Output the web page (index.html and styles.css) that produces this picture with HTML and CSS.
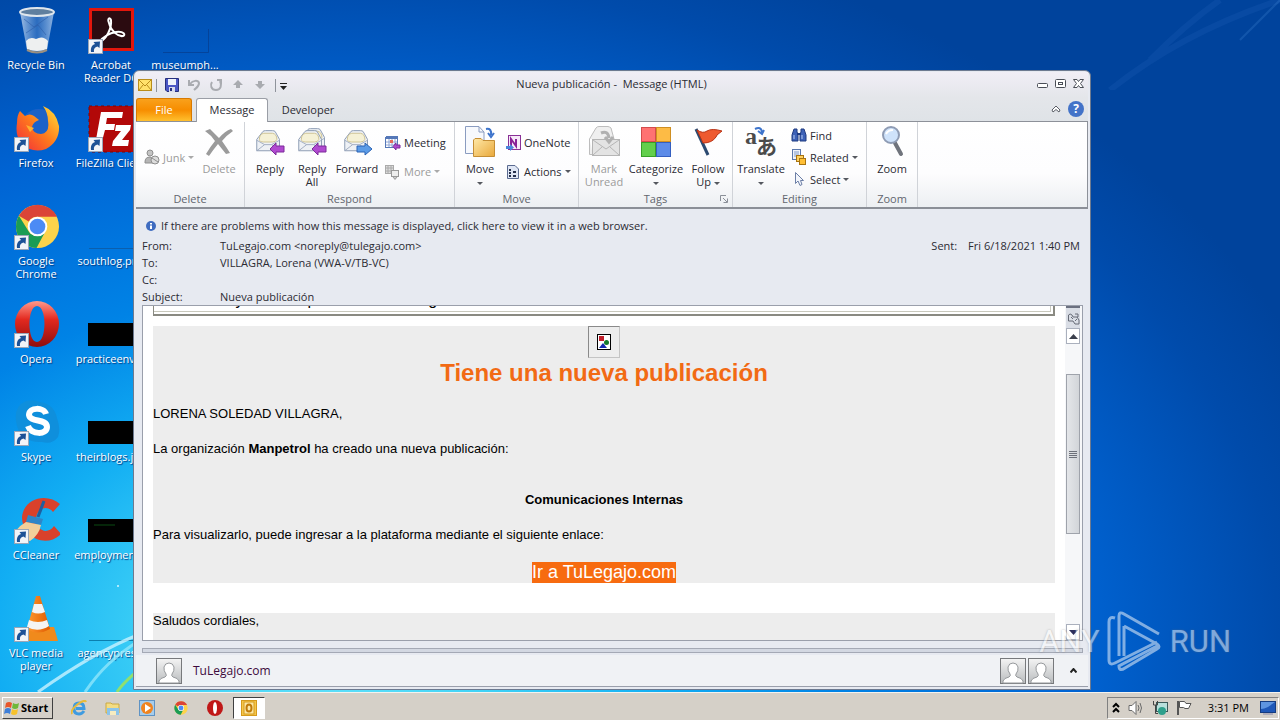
FILE: index.html
```html
<!DOCTYPE html>
<html lang="en">
<head>
    <meta charset="UTF-8">
    <meta name="viewport" content="width=device-width, initial-scale=1.0">
    <title>Nueva publicación - Message (HTML)</title>
    <link rel="stylesheet" href="styles.css">
</head>
<body>

    <!-- shared icons -->
    <svg class="defs" aria-hidden="true">
        <defs>
            <linearGradient id="g-person" x1="0" y1="0" x2="0" y2="1"><stop offset="0" stop-color="#f4f4f4"/><stop offset="1" stop-color="#b9bcbe"/></linearGradient>
            <linearGradient id="g-fold" x1="0" y1="0" x2="1" y2="1"><stop offset="0" stop-color="#ffe9a8"/><stop offset="1" stop-color="#e9a83a"/></linearGradient>
            <linearGradient id="g-opera" x1="0" y1="0" x2="0" y2="1"><stop offset="0" stop-color="#ff9a8c"/><stop offset="0.4" stop-color="#e3291f"/><stop offset="1" stop-color="#8e0d0d"/></linearGradient>
            <linearGradient id="g-fox" x1="0" y1="1" x2="1" y2="0"><stop offset="0" stop-color="#f0263f"/><stop offset="0.5" stop-color="#ff7a1c"/><stop offset="1" stop-color="#ffe43a"/></linearGradient>
            <linearGradient id="g-cone" x1="0" y1="0" x2="1" y2="0"><stop offset="0" stop-color="#ff9a2e"/><stop offset="1" stop-color="#e05a00"/></linearGradient>
            <linearGradient id="g-bin" x1="0" y1="0" x2="1" y2="0"><stop offset="0" stop-color="#bcd3ee" stop-opacity="0.85"/><stop offset="0.5" stop-color="#4f86cc" stop-opacity="0.55"/><stop offset="1" stop-color="#a8c6ea" stop-opacity="0.85"/></linearGradient>
        </defs>
        <symbol id="arrow" viewBox="0 0 15 15">
            <rect x="0.5" y="0.5" width="14" height="14" fill="#f2f4f8" stroke="#9aa6b8"/>
            <path d="M3 13 C2.500 8.500 4 6 7 5 L5.500 3 L12 2.500 L11.500 9 L9.500 7.500 C6.500 8.500 5.500 10 6 13 Z" fill="#1d5196"/>
        </symbol>
        <symbol id="envelope" viewBox="0 0 32 32">
            <path d="M2 13 L9 4 Q10 3 12 3 H20 Q22 3 23 4 L28 13 V26 H2 Z" fill="#eef1f5" stroke="#8191ac"/>
            <path d="M5 13 Q5 7 10 6 H20 Q25 7 25 13 Q24 16 20 16 H10 Q5 16 5 13 Z" fill="#f5f1d6" stroke="#cabf8a"/>
            <path d="M2 14 L11 19 H19 L28 14 M2 26 L11 19 M28 26 L19 19" fill="none" stroke="#9aa7bd"/>
        </symbol>
        <symbol id="chrome" viewBox="0 0 46 46">
            <circle cx="23" cy="23" r="22" fill="#fdd34b"/>
            <path d="M4 12 A22 22 0 0 1 43 13 H23 A10 10 0 0 0 14 18 Z" fill="#db4437"/>
            <path d="M4 12 A22 22 0 0 0 22 45 L31 28 A10 10 0 0 1 14 28 Z" fill="#1a9c55"/>
            <circle cx="23" cy="23" r="10" fill="#fff"/>
            <circle cx="23" cy="23" r="8" fill="#4c8bf5"/>
        </symbol>
        <symbol id="person" viewBox="0 0 26 26">
            <rect x="0.5" y="0.5" width="25" height="25" fill="url(#g-person)" stroke="#77797c"/>
            <path d="M3 25 V23 Q4 20 9 19 Q11 18 10 16 Q7.500 13 8 9 Q9 5 13 5 Q17 5 18 9 Q18.500 13 16 16 Q15 18 17 19 Q22 20 23 23 V25 Z" fill="#fff" stroke="#96999c"/>
        </symbol>
    </svg>

    <main class="desktop">
        <svg class="streaks" viewBox="0 0 300 120" aria-hidden="true">
            <path d="M38 120 C80 90 110 74 140 62" fill="none" stroke="#c9f3ff" stroke-width="3" opacity="0.8"/>
            <path d="M85 120 C100 98 115 84 140 68" fill="none" stroke="#8fe6fb" stroke-width="3" opacity="0.8"/>
            <path d="M117 120 C122 112 128 107 136 100" fill="none" stroke="#8fe070" stroke-width="3"/>
            <circle cx="118" cy="14" r="1" fill="#d8f6ff"/><circle cx="100" cy="-10" r="1" fill="#d8f6ff"/>
        </svg>
        <svg class="rays" viewBox="0 0 190 90" aria-hidden="true">
            <path d="M20 90 C70 50 130 20 190 0 M60 60 C90 30 110 14 130 0" fill="none" stroke="#3f86d8" stroke-width="6" opacity="0.12"/>
            <path d="M150 40 L190 0" stroke="#5aa0e8" stroke-width="2" opacity="0.2"/>
        </svg>

        <nav class="shortcuts">
            <a class="shortcut" href="#">
                <svg viewBox="0 0 48 48">
                    <path d="M8 5 H42 L35 43 Q25 47 15 43 Z" fill="url(#g-bin)"/>
                    <path d="M14 34 Q18 29 24 32 Q31 28 36 34 L35 42 Q25 46 15 42 Z" fill="#eef0f0"/>
                    <path d="M12 12 L22 20 L36 10 M14 26 L26 18 L34 28" fill="none" stroke="#2d5da8" opacity="0.6"/>
                    <ellipse cx="25" cy="5" rx="17" ry="4" fill="#5f7f9f" stroke="#dfe6ec" stroke-width="2"/>
                    <path d="M15 43 Q25 48 35 43" fill="none" stroke="#998f80" stroke-width="2"/>
                </svg>
                <span>Recycle Bin</span>
            </a>
            <a class="shortcut" href="#">
                <svg viewBox="0 0 48 48">
                    <rect x="3.500" y="2.500" width="42" height="40" fill="#2b0b10" stroke="#e2160c" stroke-width="3"/>
                    <path d="M13 35 C19 32 25 22 24 13 C23 10 20 11 22 16 C24 24 31 30 36 29 C39 28 37 24 29 25 C22 26 15 31 13 34 Z" fill="none" stroke="#fff" stroke-width="2"/>
                    <use href="#arrow" x="1" y="32" width="15" height="15"/>
                </svg>
                <span>Acrobat<br>Reader DC</span>
            </a>
            <a class="shortcut" href="#">
                <svg viewBox="0 0 48 48">
                    <path d="M2 45.500 H47.500 V22" fill="none" stroke="#063c8c" opacity="0.7"/>
                </svg>
                <span>museumph...</span>
            </a>
            <a class="shortcut" href="#">
                <svg viewBox="0 0 48 48">
                    <circle cx="27" cy="22" r="18" fill="#1c62c8"/>
                    <path d="M5 18 Q5 10 8 6 L13 11 Q18 8 22 11 L27 15 Q21 17 20 22 Q21 29 29 29 Q38 28 36 16 Q36 8 31 1 Q44 6 47 21 Q48 36 34 44 Q20 49 9 38 Q3 30 5 18 Z" fill="url(#g-fox)"/>
                    <path d="M14 20 L22 23 L18 27 Z" fill="#ffb02e"/>
                    <use href="#arrow" x="2" y="32" width="15" height="15"/>
                </svg>
                <span>Firefox</span>
            </a>
            <a class="shortcut" href="#">
                <svg viewBox="0 0 48 48">
                    <rect x="2" y="1" width="46" height="46" fill="#b20808" stroke="#7c0404" stroke-dasharray="3 3"/>
                    <path d="M14 7 H36 L35 13 H20 L19 19 H28 L27 25 H18 L14 40 H8 Z M29 20 H44 L43 25 L35 35 H42 L41 41 H25 L26 36 L34 26 H28 Z" fill="#fff"/>
                    <use href="#arrow" x="1" y="32" width="15" height="15"/>
                </svg>
                <span>FileZilla Client</span>
            </a>
            <a class="shortcut" href="#">
                <svg viewBox="0 0 48 48">
                    <use href="#chrome" x="3" y="1" width="45" height="45"/>
                    <use href="#arrow" x="2" y="32" width="15" height="15"/>
                </svg>
                <span>Google<br>Chrome</span>
            </a>
            <a class="shortcut" href="#">
                <svg viewBox="0 0 48 48">
                    <path d="M2 45.500 H48" stroke="#0b5fae"/>
                </svg>
                <span>southlog.png</span>
            </a>
            <a class="shortcut" href="#">
                <svg viewBox="0 0 48 48">
                    <path fill-rule="evenodd" d="M25 0 A22 23 0 0 1 25 46 A22 23 0 0 1 25 0 Z M25 5 C15 5 15 41 25 41 C35 41 35 5 25 5 Z" fill="url(#g-opera)"/>
                    <use href="#arrow" x="2" y="32" width="15" height="15"/>
                </svg>
                <span>Opera</span>
            </a>
            <a class="shortcut" href="#">
                <svg viewBox="0 0 48 48"><rect x="1" y="22" width="47" height="23"/></svg>
                <span>practiceenvi...</span>
            </a>
            <a class="shortcut" href="#">
                <svg viewBox="0 0 48 48">
                    <path d="M14 2 Q22 0 28 3 Q42 5 45 19 Q49 30 46 38 Q40 46 30 43 Q10 44 5 27 Q0 8 14 2 Z" fill="#0f8fdc"/>
                    <path d="M34 15 C32 8 17 8 17 16 C18 24 35 19 35 28 C35 36 19 36 16 27" fill="none" stroke="#fff" stroke-width="6"/>
                    <use href="#arrow" x="2" y="32" width="15" height="15"/>
                </svg>
                <span>Skype</span>
            </a>
            <a class="shortcut" href="#">
                <svg viewBox="0 0 48 48"><rect x="1" y="22" width="47" height="23"/></svg>
                <span>theirblogs.jpg</span>
            </a>
            <a class="shortcut" href="#">
                <svg viewBox="0 0 48 48">
                    <path d="M48 7 C36 -4 12 0 10 20 C10 40 34 52 49 37 L42 29 C36 38 24 34 24 22 C25 10 36 8 41 15 Z" fill="#d9412b"/>
                    <path d="M32 4 L26 20" stroke="#1e5fa0" stroke-width="3"/>
                    <path d="M16 18 L31 22 L29 28 L14 25 Z" fill="#2f86c8"/>
                    <path d="M14 25 L29 28 Q27 38 18 44 L3 40 Q2 32 14 25 Z" fill="#f2cf9a"/>
                    <use href="#arrow" x="2" y="32" width="15" height="15"/>
                </svg>
                <span>CCleaner</span>
            </a>
            <a class="shortcut" href="#">
                <svg viewBox="0 0 48 48"><rect x="1" y="22" width="47" height="23"/><path d="M7 28 H28" stroke="#0b4a12"/></svg>
                <span>employment...</span>
            </a>
            <a class="shortcut" href="#">
                <svg viewBox="0 0 48 48">
                    <path d="M10 32 H42 L46 46 H8 Z" fill="#f08a1c"/>
                    <path d="M24 1 H28 L38 34 Q26 41 15 34 Z" fill="url(#g-cone)"/>
                    <path d="M22 9 H30 L33 17 Q26 20 20 17 Z M17 25 Q26 29 35 25 L37 31 Q26 38 15 32 Z" fill="#f4f4f4"/>
                    <use href="#arrow" x="2" y="32" width="15" height="15"/>
                </svg>
                <span>VLC media<br>player</span>
            </a>
            <a class="shortcut" href="#">
                <svg viewBox="0 0 48 48"><path d="M2 45.500 H48" stroke="#0b7fae"/></svg>
                <span>agencypres...</span>
            </a>
        </nav>

        <section class="window">
            <header class="titlebar">
                <div class="quick">
                    <svg width="14" height="12" viewBox="0 0 14 12"><rect x="0.5" y="0.5" width="13" height="11" fill="#ffe26b" stroke="#b98d1b"/><path d="M1 1 L7 7 L13 1 M1 11 L5 6 M13 11 L9 6" fill="none" stroke="#b98d1b"/></svg>
                    <i class="bar"></i>
                    <button class="plain" aria-label="Save"><svg width="14" height="14" viewBox="0 0 14 14"><path d="M0.500 0.500 H13.500 V13.500 H2 L0.500 12 Z" fill="#4a56c4" stroke="#27307e"/><rect x="3" y="1" width="8" height="6" fill="#eef2fb"/><rect x="4" y="9" width="6" height="5" fill="#d8dcec"/><rect x="5" y="10" width="2" height="3" fill="#27307e"/></svg></button>
                    <button class="plain" aria-label="Undo" disabled><svg width="14" height="14" viewBox="0 0 14 14"><path d="M2 2 V7 H7 M3 6 C6 2 11 2 12 5 C12 9 9 10 7 12" fill="none" stroke="#a9abb0" stroke-width="2"/></svg></button>
                    <button class="plain" aria-label="Redo" disabled><svg width="14" height="14" viewBox="0 0 14 14"><path d="M8 2 H12 V6 M11 3 C13 7 12 12 7 12 C2 12 1 7 3 4" fill="none" stroke="#a9abb0" stroke-width="2"/></svg></button>
                    <button class="plain" aria-label="Previous" disabled><svg width="14" height="14" viewBox="0 0 14 14"><path d="M7 2 L12 7 H9 V10 H5 V7 H2 Z" fill="#a9abb0"/></svg></button>
                    <button class="plain" aria-label="Next" disabled><svg width="14" height="14" viewBox="0 0 14 14"><path d="M7 11 L12 6 H9 V3 H5 V6 H2 Z" fill="#a9abb0"/></svg></button>
                    <i class="bar"></i>
                    <button class="plain narrow" aria-label="Customize toolbar"><svg width="7" height="14" viewBox="0 0 7 14"><path d="M0 5.500 H7" stroke="#222"/><path d="M0 8 H7 L3.500 12 Z" fill="#222"/></svg></button>
                </div>
                <h1>Nueva publicación -&nbsp; Message (HTML)</h1>
                <div class="controls">
                    <button class="plain" aria-label="Minimize"><svg width="12" height="12" viewBox="0 0 12 12"><rect x="0.500" y="5.500" width="10" height="4" rx="1" fill="#fff" stroke="#4a4e57"/></svg></button>
                    <button class="plain" aria-label="Restore"><svg width="12" height="12" viewBox="0 0 12 12"><rect x="0.500" y="1.500" width="10" height="8" rx="1" fill="#fff" stroke="#4a4e57"/><rect x="3.500" y="4.500" width="4" height="2" fill="#fff" stroke="#4a4e57"/></svg></button>
                    <button class="plain" aria-label="Close"><svg width="12" height="12" viewBox="0 0 12 12"><path d="M0.500 1.500 H4 L5.500 3.500 L7 1.500 H10.500 L7.500 5.500 L10.500 9.500 H7 L5.500 7.500 L4 9.500 H0.500 L3.500 5.500 Z" fill="#fff" stroke="#4a4e57"/></svg></button>
                </div>
            </header>

            <nav class="tabs">
                <button class="tab file">File</button>
                <button class="tab active">Message</button>
                <button class="tab">Developer</button>
                <div class="tabs-end">
                    <button class="plain" aria-label="Minimize the ribbon"><svg width="10" height="10" viewBox="0 0 10 10"><path d="M1 6 L5 2 L9 6 L8 8 L5 5.500 L2 8 Z" fill="#fff" stroke="#5a5e67"/></svg></button>
                    <button class="help" aria-label="Help">?</button>
                </div>
            </nav>

            <div class="ribbon">
                <div class="group g-delete">
                    <div class="tools">
                        <div class="stack junk">
                            <button class="small" disabled>
                                <svg width="16" height="16" viewBox="0 0 16 16"><circle cx="6" cy="4" r="3" fill="#c4c4c4" stroke="#8e8e8e"/><path d="M1 13 Q1 8 6 8 Q10 8 11 12 V14 H1 Z" fill="#b5b5b5" stroke="#8e8e8e"/><circle cx="11" cy="11" r="4" fill="#ddd" stroke="#8e8e8e"/><path d="M8 9 L14 13" stroke="#8e8e8e"/></svg>
                                Junk <i class="caret"></i>
                            </button>
                        </div>
                        <button class="big" disabled>
                            <svg width="32" height="32" viewBox="0 0 32 32"><path d="M2 5 L7 3 L16 12 Q22 5 28 3 L30 5 Q24 9 19 15 Q24 22 27 27 L23 28 Q19 23 15 18 Q10 24 6 30 L3 28 Q7 21 12 15 Q8 9 2 5 Z" fill="#9b9b9b"/></svg>
                            Delete
                        </button>
                    </div>
                    <h2>Delete</h2>
                </div>
                <div class="group g-respond">
                    <div class="tools">
                        <button class="big">
                            <svg width="32" height="32" viewBox="0 0 32 32"><use href="#envelope" x="1" width="28" height="32"/><path d="M16 23 L22 17 V20 H30 V26 H22 V29 Z" fill="#b04ad0" stroke="#7c2b9a"/></svg>
                            Reply
                        </button>
                        <button class="big">
                            <svg width="32" height="32" viewBox="0 0 32 32"><use href="#envelope" x="4" y="-2" width="28" height="32"/><use href="#envelope" x="1" width="28" height="32"/><path d="M16 23 L22 17 V20 H30 V26 H22 V29 Z" fill="#b04ad0" stroke="#7c2b9a"/></svg>
                            Reply All
                        </button>
                        <button class="big mid">
                            <svg width="32" height="32" viewBox="0 0 32 32"><use href="#envelope" x="2" width="28" height="32"/><path d="M31 23 L24 17 V20 H16 V26 H24 V29 Z" fill="#5b9be6" stroke="#2a63b4"/></svg>
                            Forward
                        </button>
                        <div class="stack">
                            <button class="small">
                                <svg width="16" height="16" viewBox="0 0 16 16"><rect x="0.500" y="2.500" width="12" height="10" fill="#fff" stroke="#5578b8"/><rect x="1" y="1" width="12" height="3" fill="#5578b8"/><path d="M4 4 V12 M7 4 V12 M10 4 V12 M1 7 H12 M1 10 H12" stroke="#8fa6d4"/><rect x="5" y="5" width="3" height="3" fill="#e66b5b"/><path d="M8 11.500 L11 8 V10 H15 V13 H11 V15 Z" fill="#b04ad0" stroke="#7c2b9a"/></svg>
                                Meeting
                            </button>
                            <button class="small" disabled>
                                <svg width="16" height="16" viewBox="0 0 16 16"><rect x="0.500" y="1.500" width="8" height="8" fill="#ddd" stroke="#aaa"/><path d="M3 1 V9 M6 1 V9 M1 4 H8 M1 7 H8" stroke="#aaa"/><rect x="6.500" y="6.500" width="7" height="6" fill="#eee" stroke="#999"/><path d="M10 12 V15 M12 13 L10 15.500 L8 13" stroke="#999" fill="none"/></svg>
                                More <i class="caret"></i>
                            </button>
                        </div>
                    </div>
                    <h2>Respond</h2>
                </div>
                <div class="group g-move">
                    <div class="tools">
                        <button class="big">
                            <svg width="32" height="32" viewBox="0 0 32 32"><path d="M1.500 0.500 H15 L20 6 V27.500 H1.500 Z" fill="#f7f9fd" stroke="#8a9cc0"/><path d="M15 1 V6 H20" fill="none" stroke="#8a9cc0"/><path d="M22 3 Q28 2 27 9 M24 7 L27 11 L30 7" fill="none" stroke="#3d74cc" stroke-width="2"/><path d="M9.500 14 L11 12.500 H17 L19 14.500 H30.500 V30.500 H9.500 Z" fill="url(#g-fold)" stroke="#c58e35"/></svg>
                            Move<br><i class="caret"></i>
                        </button>
                        <div class="stack">
                            <button class="small">
                                <svg width="16" height="16" viewBox="0 0 16 16"><rect x="3.500" y="0.500" width="12" height="14" fill="#f6e9f8" stroke="#8a3196"/><path d="M6 11 V4 L11 11 V4" fill="none" stroke="#8a2096" stroke-width="2"/><path d="M1 11 H5 V9 L9 12.500 L5 16 V14 H1 Z" fill="#4b86dc"/></svg>
                                OneNote
                            </button>
                            <button class="small">
                                <svg width="16" height="16" viewBox="0 0 16 16"><path d="M2.500 1.500 H10 L13.500 5 V14.500 H2.500 Z" fill="#dfe6f4" stroke="#5a6a90"/><path d="M4 6 H6 M4 9 H6 M4 12 H6 M8 8 H11 M8 12 H11" stroke="#26304c" stroke-width="2"/></svg>
                                Actions <i class="caret"></i>
                            </button>
                        </div>
                    </div>
                    <h2>Move</h2>
                </div>
                <div class="group g-tags">
                    <div class="tools">
                        <button class="big" disabled>
                            <svg width="32" height="32" viewBox="0 0 32 32"><path d="M1.500 13 V28.500 H5 M1.500 13 L8 2 Q9 0.500 11 0.500 H20 Q22 1 23 2 L26 13" fill="#efefef" stroke="#bdbdbd"/><rect x="4.500" y="13.500" width="27" height="16" fill="#e3e3e3" stroke="#b5b5b5"/><path d="M5 14 L18 23 L31 14 M5 29 L14 21 M31 29 L22 21" fill="none" stroke="#b5b5b5"/><path d="M13 7 Q20 4 21 12 M17 11 L21 16 L25 11" fill="none" stroke="#b0b0b0" stroke-width="3"/></svg>
                            Mark Unread
                        </button>
                        <button class="big wide">
                            <svg width="32" height="32" viewBox="0 0 32 32"><rect x="1.500" y="1.500" width="14" height="14" fill="#ff7272" stroke="#d44c4c"/><rect x="16.500" y="1.500" width="14" height="14" fill="#fdbb45" stroke="#cf8f22"/><rect x="1.500" y="16.500" width="14" height="14" fill="#62cf4c" stroke="#37a028"/><rect x="16.500" y="16.500" width="14" height="14" fill="#5c8be8" stroke="#345fc0"/></svg>
                            Categorize<br><i class="caret"></i>
                        </button>
                        <button class="big">
                            <svg width="32" height="32" viewBox="0 0 32 32"><path d="M4 3 L16 29" stroke="#2c4a70" stroke-width="3"/><path d="M5 4 Q11 8 15 5 Q20 2 30 5 L25 9 L24 11 Q20 17 11 17 Z" fill="#ee5a30" stroke="#b83214"/></svg>
                            Follow Up <i class="caret"></i>
                        </button>
                    </div>
                    <h2>Tags</h2>
                    <button class="plain launcher" aria-label="Message options"><svg width="8" height="8" viewBox="0 0 8 8"><path d="M0.500 6 V0.500 H6 M3 3 L7 7 M7.500 3.500 V7.500 H3.500" fill="none" stroke="#8a8f98"/></svg></button>
                </div>
                <div class="group g-editing">
                    <div class="tools">
                        <button class="big mid">
                            <svg class="glyphs" width="32" height="32" viewBox="0 0 32 32"><text class="latin" x="0" y="18">a</text><text class="kana" x="11" y="28">あ</text><path d="M10 3 Q16 0 17 6 M13 5 L17 8 L19 4" fill="none" stroke="#3d74cc" stroke-width="2"/></svg>
                            Translate<br><i class="caret"></i>
                        </button>
                        <div class="stack three">
                            <button class="small">
                                <svg width="16" height="16" viewBox="0 0 16 16"><path d="M3 2 H6 V5 L7 7 V14 H1 V8 Z M10 2 H13 L15 8 V14 H9 V7 L10 5 Z" fill="#3d62b8" stroke="#1f3a80"/><path d="M6 7 H10" stroke="#1f3a80" stroke-width="2"/><path d="M3 8 V12 M11 8 V12" stroke="#b8cdf4"/></svg>
                                Find
                            </button>
                            <button class="small">
                                <svg width="16" height="16" viewBox="0 0 16 16"><rect x="1.500" y="0.500" width="8" height="10" fill="#eef3fb" stroke="#5a78ac"/><path d="M3 3 H8 M3 5 H8 M3 7 H8" stroke="#7f9acb"/><rect x="5.500" y="6.500" width="7" height="6" fill="#ffd262" stroke="#a87410"/><rect x="8.500" y="9.500" width="6" height="6" fill="#ffbf35" stroke="#a87410"/></svg>
                                Related <i class="caret"></i>
                            </button>
                            <button class="small">
                                <svg width="16" height="16" viewBox="0 0 16 16"><path d="M4.500 1.500 V12.500 L7 10 L9 14.500 L11 13.500 L9.500 9.500 H12.500 Z" fill="#f2f5fb" stroke="#6c7fa6"/></svg>
                                Select <i class="caret"></i>
                            </button>
                        </div>
                    </div>
                    <h2>Editing</h2>
                </div>
                <div class="group g-zoom">
                    <div class="tools">
                        <button class="big">
                            <svg width="32" height="32" viewBox="0 0 32 32"><path d="M19 17 L25 28" stroke="#70747c" stroke-width="4" stroke-linecap="round"/><circle cx="15" cy="9" r="8" fill="#cfe3fb" stroke="#8f9cb4" stroke-width="2"/><path d="M10 8 Q12 4 17 4" stroke="#fff" stroke-width="2" fill="none"/></svg>
                            Zoom
                        </button>
                    </div>
                    <h2>Zoom</h2>
                </div>
            </div>

            <div class="message-head">
                <p class="infobar">
                    <svg width="10" height="10" viewBox="0 0 10 10"><circle cx="5" cy="5" r="5" fill="#3f6cc0"/><path d="M5 2 V3.500 M5 4.500 V8" stroke="#fff" stroke-width="2"/></svg>
                    If there are problems with how this message is displayed, click here to view it in a web browser.
                </p>
                <dl class="fields">
                    <dt>From:</dt><dd>TuLegajo.com &lt;noreply@tulegajo.com&gt;</dd>
                    <dt>To:</dt><dd>VILLAGRA, Lorena (VWA-V/TB-VC)</dd>
                    <dt>Cc:</dt><dd></dd>
                    <dt>Subject:</dt><dd>Nueva publicación</dd>
                </dl>
                <p class="sent"><span>Sent:</span><span>Fri 6/18/2021 1:40 PM</span></p>
            </div>

            <div class="pane">
                <article class="mail">
                    <p class="notice">Contenido y enlaces para mostrar imagen</p>
                    <div class="block">
                        <span class="missing" role="img" aria-label="Image not loaded"><svg width="14" height="16" viewBox="0 0 14 16"><rect x="0.500" y="0.500" width="13" height="15" fill="#fff" stroke="#000"/><rect x="2" y="2" width="5" height="5" fill="#c01f2c"/><circle cx="9.500" cy="8.500" r="2.500" fill="#157a2c"/><path d="M2 14 L6 9 L10 14 Z" fill="#1528b0"/></svg></span>
                        <h3>Tiene una nueva publicación</h3>
                        <p>LORENA SOLEDAD VILLAGRA,</p>
                        <p>La organización <b>Manpetrol</b> ha creado una nueva publicación:</p>
                        <p class="topic">Comunicaciones Internas</p>
                        <p>Para visualizarlo, puede ingresar a la plataforma mediante el siguiente enlace:</p>
                        <div class="center"><a class="cta" href="#">Ir a TuLegajo.com</a></div>
                    </div>
                    <div class="block last"><p>Saludos cordiales,</p></div>
                </article>
                <div class="scroll">
                    <i class="split"></i>
                    <button class="plain ruler" aria-label="Ruler"><svg width="13" height="12" viewBox="0 0 13 12"><path d="M1.500 2 Q3 0 5 2 L6 4 H11 V1 H8 M1.500 2 V8 H6 L8 11 H12 V7 L10 4 M8 8 L10 6 M4 4 L6 6" fill="none" stroke="#666b76"/></svg></button>
                    <button class="plain step up" aria-label="Scroll up"><svg width="9" height="5" viewBox="0 0 9 5"><path d="M0 5 L4.500 0 L9 5 Z" fill="#3a3f4c"/></svg></button>
                    <div class="track"><div class="thumb"><i></i><i></i><i></i><i></i></div></div>
                    <button class="plain step" aria-label="Scroll down"><svg width="9" height="5" viewBox="0 0 9 5"><path d="M0 0 L4.500 5 L9 0 Z" fill="#2d2f5c"/></svg></button>
                </div>
            </div>

            <div class="splitter"></div>

            <footer class="people">
                <svg width="26" height="26"><use href="#person" width="26" height="26"/></svg>
                <a href="#">TuLegajo.com</a>
                <div class="faces">
                    <svg width="26" height="26"><use href="#person" width="26" height="26"/></svg>
                    <svg width="26" height="26"><use href="#person" width="26" height="26"/></svg>
                </div>
                <button class="plain" aria-label="Expand people pane"><svg width="7" height="5" viewBox="0 0 7 5"><path d="M0.500 4.500 L3.500 1 L6.500 4.500" fill="none" stroke="#222" stroke-width="2"/></svg></button>
            </footer>
        </section>

        <div class="watermark">
            <span>ANY</span>
            <svg width="56" height="64" viewBox="0 0 56 64"><path d="M8 8 Q2 6 2 12 V50 Q2 56 8 53 L50 32 M12 46 V6 Q12 1 17 4 L52 24 M17 16 L50 34 Q54 37 50 39 L18 58 Q12 62 12 56 L50 36 M17 16 V46" fill="none" stroke="#fff" stroke-width="3"/></svg>
            <span>RUN</span>
        </div>
    </main>

    <footer class="taskbar">
        <button class="start">
            <svg width="16" height="16" viewBox="0 0 16 16"><path d="M2 3 Q5 1 8 3 L7 8 Q4 6 1 8 Z" fill="#e8562a"/><path d="M9 3 Q12 5 15 3 L14 8 Q11 10 8 8 Z" fill="#6fb83a"/><path d="M1 9 Q4 7 7 9 L6 14 Q3 12 0 14 Z" fill="#3f7fd8"/><path d="M8 9 Q11 11 14 9 L13 14 Q10 16 7 14 Z" fill="#f7c22c"/></svg>
            Start
        </button>
        <div class="apps">
            <button class="app" aria-label="Internet Explorer"><svg viewBox="0 0 16 16"><path d="M13 11 Q11 14 8 14 Q3 14 3 8.500 Q3 3 8 3 Q13 3 13 8.500 H5" fill="none" stroke="#3f9be0" stroke-width="3"/><path d="M1 14 Q-1 10 7 4 Q14 -1 15 2" fill="none" stroke="#e8bb3a" stroke-width="2"/></svg></button>
            <button class="app" aria-label="Explorer"><svg viewBox="0 0 16 16"><path d="M1 3 H6 L7 4 H14 V13 H1 Z" fill="#f4dc82" stroke="#c9a944"/><rect x="2" y="8" width="12" height="7" fill="#8cc4ea"/><path d="M5 11 H11 V15 H5 Z" fill="#f7ecc0"/></svg></button>
            <button class="app" aria-label="Media Player"><svg viewBox="0 0 16 16"><rect x="0.500" y="0.500" width="15" height="15" fill="#a6cdec" stroke="#5f93c4"/><circle cx="8" cy="8" r="6" fill="#f08420"/><path d="M6 4 L12 8 L6 12 Z" fill="#fff"/></svg></button>
            <button class="app" aria-label="Chrome"><svg viewBox="0 0 16 16"><use href="#chrome" x="1" y="1" width="14" height="14"/></svg></button>
            <button class="app" aria-label="Opera"><svg viewBox="0 0 16 16"><circle cx="8" cy="8" r="8" fill="#c01818"/><ellipse cx="8" cy="8" rx="2" ry="6" fill="#fff"/></svg></button>
            <button class="app running" aria-label="Outlook"><svg viewBox="0 0 16 16"><rect x="0.500" y="0.500" width="15" height="15" fill="#f5c64a" stroke="#d59a1c"/><rect x="3" y="2" width="10" height="12" fill="#fbe7a6" stroke="#d59a1c"/><ellipse cx="8" cy="8" rx="2.500" ry="3.500" fill="none" stroke="#c07a08" stroke-width="2"/></svg></button>
        </div>
        <div class="tray">
            <svg width="8" height="12" viewBox="0 0 8 12"><path d="M1 5 L4 2 L7 5 M1 10 L4 7 L7 10" fill="none" stroke="#000" stroke-width="2"/></svg>
            <svg width="16" height="16" viewBox="0 0 16 16"><path d="M1 5.500 H4 L8 1.500 V14.500 L4 10.500 H1 Z" fill="#fff" stroke="#6a6a6a"/><path d="M10 5 Q12 8 10 11 M12 3 Q15 8 12 13" fill="none" stroke="#6a6a6a"/></svg>
            <svg width="16" height="16" viewBox="0 0 16 16"><rect x="4.500" y="2.500" width="11" height="9" fill="#b8e0dc" stroke="#3a5a5a"/><circle cx="10" cy="11" r="4" fill="#2fa08c"/><path d="M1.500 1 V5 H5.500 V1 M3.500 5 V13.500 H6" fill="none" stroke="#444"/></svg>
            <svg width="16" height="16" viewBox="0 0 16 16"><path d="M2 1 V15" stroke="#555" stroke-width="2"/><path d="M3.500 1.500 H8.500 L10 3.500 H15 L12.500 8.500 H9 L7.500 7.500 H3.500 Z" fill="#fff" stroke="#555"/></svg>
            <time>3:31 PM</time>
            <svg width="16" height="14" viewBox="0 0 16 14"><rect x="0.500" y="0.500" width="15" height="11" fill="#1f58b8" stroke="#163c80"/><path d="M1 1 H15 L8 6 Q4 8 1 8 Z" fill="#5f95e0"/><path d="M3 13 H13" stroke="#88a"/></svg>
        </div>
    </footer>

</body>
</html>
```

FILE: styles.css
```css
* {
    box-sizing: border-box;
}

body {
    margin: 0;
    height: 100vh;
    display: flex;
    flex-direction: column;
    overflow: hidden;
    font-family: "Open Sans", "Noto Sans", sans-serif;
    font-size: 11px;
    line-height: 13px;
    color: #2b2b33;
}

h1, h2, h3, p, dl, dd {
    margin: 0;
    font-weight: normal;
}

a {
    text-decoration: none;
}

button {
    padding: 0;
    border: none;
    background: none;
    font: inherit;
    color: inherit;
}

svg {
    display: block;
    flex: none;
}

.defs {
    position: absolute;
    width: 0;
    height: 0;
}

.plain {
    display: flex;
    align-items: center;
    justify-content: center;
}

.caret {
    display: inline-block;
    vertical-align: middle;
    border: 3px solid transparent;
    border-top-color: #55585f;
    border-bottom: none;
}

button:disabled {
    color: #9b9b9b;
}

button:disabled .caret {
    border-top-color: #a9a9a9;
}

/* Desktop */

.desktop {
    flex: 1;
    min-height: 0;
    position: relative;
    overflow: hidden;
    background: radial-gradient(ellipse 82% 106% at 26% 92%, #6fe6fa 0%, #40d2f6 16%, #12aef3 32%, #0083e6 48%, #0064d4 70%, #004bab 90%, #00439c 100%);
}

.streaks {
    position: absolute;
    left: 0;
    bottom: 0;
    width: 300px;
    height: 120px;
    overflow: visible;
}

.rays {
    position: absolute;
    top: 0;
    right: 0;
    width: 190px;
    height: 90px;
}

.shortcuts {
    display: grid;
    grid-template-columns: 72px 78px 70px;
    grid-auto-rows: 98px;
    padding-top: 7px;
}

.shortcut {
    display: flex;
    flex-direction: column;
    align-items: center;
    gap: 3px;
    color: #fff;
    text-align: center;
    white-space: nowrap;
    text-shadow: 1px 1px 1px #003a80;
}

.shortcut:nth-child(2n+4) {
    grid-column: 1;
}

.shortcut svg {
    width: 48px;
    height: 48px;
}

/* Message window */

.window {
    position: absolute;
    top: 70px;
    left: 133px;
    right: 189px;
    bottom: 2px;
    display: flex;
    flex-direction: column;
    padding: 1px 2px 2px;
    border: 1px solid #6d7a90;
    border-radius: 6px 6px 0 0;
    background: #e7eaf1;
}

.titlebar {
    display: grid;
    grid-template-columns: 1fr auto 1fr;
    align-items: center;
    height: 26px;
    padding: 0 3px 0 2px;
    background: linear-gradient(#f1eef6, #e4e6ea);
}

.titlebar h1 {
    padding-bottom: 3px;
    font-size: 11px;
}

.quick {
    display: flex;
    align-items: center;
}

.quick .plain {
    width: 22px;
}

.quick .narrow {
    width: 7px;
}

.bar {
    width: 1px;
    height: 13px;
    margin: 0 4px;
    background: #8f939b;
}

.controls {
    display: flex;
    justify-content: flex-end;
    gap: 6px;
    padding-bottom: 3px;
}

.tabs {
    display: flex;
    gap: 4px;
    height: 24px;
    border-bottom: 1px solid #8d9199;
    background: linear-gradient(#e4e6ea, #dfe3e7);
}

.tab {
    width: 72px;
    height: 24px;
    padding-bottom: 2px;
    border: 1px solid transparent;
    border-bottom: none;
    border-radius: 3px 3px 0 0;
}

.tab.active {
    border-color: #9a9ea6;
    background: #fff;
}

.tab.file {
    width: 56px;
    height: 23px;
    border-color: #d87a00;
    background: linear-gradient(#f9a11c, #f78d00 50%, #ffc02e);
    color: #fff;
}

.tabs-end {
    display: flex;
    align-items: center;
    gap: 7px;
    margin-left: auto;
    padding: 0 4px 2px 0;
}

.help {
    width: 16px;
    height: 16px;
    border-radius: 50%;
    background: #4373c8;
    color: #fff;
    font-weight: bold;
    font-size: 12px;
}

.ribbon {
    display: flex;
    height: 87px;
    border-right: 1px solid #8d9199;
    border-bottom: 2px solid #8b8f97;
    background: linear-gradient(#fff, #fdfdfe 60%, #eceff2);
}

.group {
    position: relative;
    display: flex;
    flex-direction: column;
    justify-content: space-between;
    padding-left: 4px;
    border-right: 1px solid #d0d3d8;
}

.group h2 {
    padding: 0 4px 2px 0;
    font-size: 11px;
    text-align: center;
    color: #62666e;
}

.g-delete { width: 109px; }
.g-respond { width: 210px; }
.g-move { width: 124px; }
.g-tags { width: 154px; }
.g-editing { width: 134px; }
.g-zoom { width: 51px; }

.tools {
    display: flex;
    height: 70px;
}

.big {
    width: 42px;
    padding-top: 4px;
    display: block;
    line-height: 13px;
    align-self: flex-start;
}

.big svg {
    margin: 0 auto 4px;
}

.big.mid {
    width: 48px;
}

.big.wide {
    width: 62px;
}

.stack {
    display: flex;
    flex-direction: column;
    justify-content: center;
    gap: 13px;
    padding-left: 4px;
}

.stack.three {
    gap: 6px;
    padding-left: 6px;
}

.stack.junk {
    width: 58px;
}

.small {
    display: flex;
    align-items: center;
    gap: 3px;
    height: 16px;
    white-space: nowrap;
}

.launcher {
    position: absolute;
    right: 4px;
    bottom: 4px;
}

.glyphs {
    overflow: visible;
}

.latin {
    font: bold 24px "Liberation Serif", serif;
    fill: #4b4b4b;
}

.kana {
    font: bold 21px "Noto Sans CJK JP", sans-serif;
    fill: #4b4b4b;
}

/* Header fields */

.message-head {
    display: grid;
    grid-template-columns: 1fr auto;
    padding: 8px 8px 0 6px;
}

.infobar {
    grid-column: 1 / 3;
    display: flex;
    align-items: center;
    gap: 5px;
    height: 17px;
    padding-left: 4px;
}

.fields {
    display: grid;
    grid-template-columns: 78px 1fr;
    grid-auto-rows: 17px;
    padding-top: 3px;
    line-height: 17px;
}

.sent {
    display: flex;
    gap: 11px;
    padding-top: 3px;
    line-height: 17px;
}

/* Message body */

.pane {
    flex: 1;
    min-height: 0;
    display: flex;
    margin: 0 5px 0 6px;
    border: 1px solid #9a9fab;
    background: #fff;
}

.mail {
    flex: 1;
    overflow: hidden;
    padding: 0 10px;
    font-family: "Liberation Sans", Arial, sans-serif;
    font-size: 13px;
    line-height: 16px;
    color: #000;
}

.notice {
    margin: -19px 0 10px;
    padding: 4px 4px 6px;
    border: 1px solid #8a8a82;
    border-width: 1px 2px 2px 1px;
    box-shadow: inset -2px -2px #fff, inset -3px -3px #c8c8bc;
    font-size: 16px;
}

.block {
    background: #ededed;
}

.block p {
    padding-bottom: 19px;
}

.missing {
    display: flex;
    align-items: center;
    justify-content: center;
    width: 32px;
    height: 32px;
    margin: 0 auto;
    border: 1px solid #8a8a8a;
    border-right-color: #c4c4c4;
    border-bottom-color: #c4c4c4;
}

.block h3 {
    padding-bottom: 19px;
    font-size: 24px;
    font-weight: bold;
    line-height: 29px;
    text-align: center;
    color: #f26a14;
}

.block .topic {
    padding-top: 16px;
    text-align: center;
    font-weight: bold;
}

.center {
    text-align: center;
}

.cta {
    display: inline-block;
    background: #f76b10;
    color: #fff;
    font-size: 18px;
    line-height: 21px;
    vertical-align: top;
}

.last {
    margin-top: 30px;
}

.scroll {
    display: flex;
    flex-direction: column;
    width: 17px;
    padding: 0 2px 0 1px;
    background: #f6f7f9;
}

.split {
    height: 4px;
    border-top: 2px solid #6b7080;
    background: #d9dde5;
}

.ruler {
    height: 18px;
    background: #d9dde5;
}

.step {
    height: 16px;
    border: 1px solid #aab0bd;
    background: #fff;
}

.track {
    flex: 1;
    padding-top: 30px;
}

.thumb {
    display: flex;
    flex-direction: column;
    align-items: center;
    justify-content: center;
    gap: 1px;
    height: 64%;
    border: 1px solid #9fa3ab;
    background: linear-gradient(90deg, #e4e6e9, #d2d5d9);
}

.thumb i {
    width: 8px;
    height: 1px;
    background: #6d717a;
}

.splitter {
    height: 5px;
    margin: 7px 5px 2px 6px;
    border: 1px solid #a4a9b5;
    background: #d3d8e2;
}

.people {
    display: flex;
    align-items: center;
    gap: 11px;
    height: 32px;
    padding: 0 11px 0 20px;
    border-bottom: 1px solid #9a9fab;
    background: #f0f2f5;
    font-size: 12px;
}

.people a {
    color: #3c0a3c;
}

.faces {
    display: flex;
    gap: 2px;
    margin-left: auto;
    padding-right: 5px;
}

.watermark {
    position: absolute;
    right: 49px;
    bottom: 18px;
    display: flex;
    align-items: center;
    gap: 7px;
    opacity: 0.5;
    color: #fff;
    font-family: Roboto, sans-serif;
    font-size: 31px;
    line-height: 64px;
    text-shadow: 0 0 2px #777;
}

/* Taskbar */

.taskbar {
    display: flex;
    align-items: center;
    height: 28px;
    padding: 2px 1px 0 2px;
    border-top: 1px solid #f4f2ee;
    background: #d5d0c8;
    color: #000;
}

.start {
    display: flex;
    align-items: center;
    gap: 1px;
    height: 22px;
    padding: 0 4px 0 1px;
    border: 1px solid #fff;
    border-right-color: #404040;
    border-bottom-color: #404040;
    font-weight: bold;
}

.apps {
    display: flex;
    gap: 2px;
    margin-left: 10px;
}

.app {
    display: flex;
    align-items: center;
    justify-content: center;
    width: 32px;
    height: 22px;
}

.app svg {
    width: 16px;
    height: 16px;
}

.running {
    border: 1px solid #404040;
    border-right-color: #fff;
    border-bottom-color: #fff;
    background: #fff;
}

.tray {
    display: flex;
    align-items: center;
    gap: 8px;
    height: 22px;
    margin-left: auto;
    padding: 0 2px 0 4px;
    border: 1px solid #808080;
    border-right-color: #fff;
    border-bottom-color: #fff;
}

.tray time {
    padding: 0 3px 0 8px;
}
```
